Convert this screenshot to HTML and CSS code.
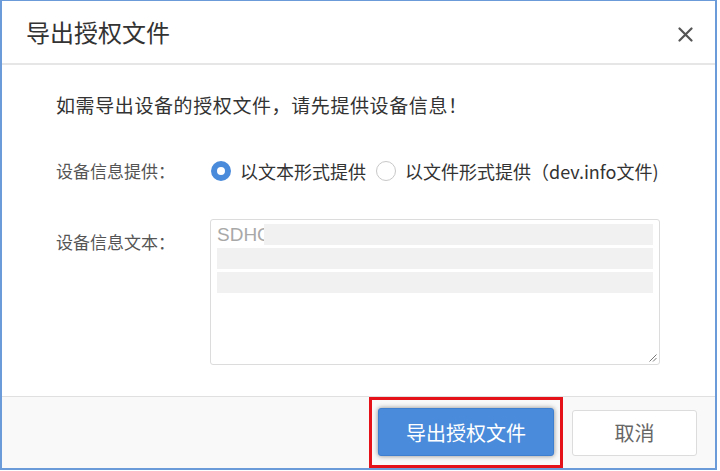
FILE: index.html
```html
<!DOCTYPE html>
<html lang="zh-CN">
<head>
<meta charset="utf-8">
<title>导出授权文件</title>
<link rel="stylesheet" href="styles.css">
</head>
<body>
<div class="dialog">
  <div class="header">
    <div class="title">导出授权文件</div>
    <svg class="close" width="15" height="15" viewBox="0 0 15 15"><path d="M1.5 1.5 L13.5 13.5 M13.5 1.5 L1.5 13.5" stroke="#555" stroke-width="2.2" stroke-linecap="round" fill="none"/></svg>
  </div>
  <div class="body">
    <div class="tip">如需导出设备的授权文件，请先提供设备信息！</div>
    <div class="form-row radio-row">
      <div class="label">设备信息提供：</div>
      <div class="radios">
        <label class="radio"><span class="dot checked"></span><span>以文本形式提供</span></label>
        <label class="radio"><span class="dot"></span><span>以文件形式提供（dev.info文件)</span></label>
      </div>
    </div>
    <div class="form-row area-row">
      <div class="label area-label">设备信息文本：</div>
      <div class="textarea">
        <div class="line"><span class="code">SDHC</span><span class="mask"></span></div>
        <div class="line"><span class="mask"></span></div>
        <div class="line"><span class="mask"></span></div>
        <svg class="grip" width="8" height="8" viewBox="0 0 8 8"><path d="M7.5 0.5 L0.5 7.5 M7.5 4 L4 7.5" stroke="#777" stroke-width="1" fill="none"/></svg>
      </div>
    </div>
  </div>
  <div class="footer">
    <span class="highlight"><button class="btn primary">导出授权文件</button></span>
    <button class="btn cancel">取消</button>
  </div>
</div>
</body>
</html>
```
FILE: styles.css
```css
* { box-sizing: border-box; }
html, body { margin: 0; padding: 0; background: #fff; }
body {
  font-family: "Noto Sans CJK SC", "Noto Sans", sans-serif;
  color: #333;
}
.dialog {
  width: 717px;
  height: 470px;
  border: 2px solid #6b9bd8;
  border-top-width: 1px;
  display: flex;
  flex-direction: column;
  background: #fff;
}
.header {
  height: 64px;
  flex: none;
  display: flex;
  align-items: center;
  justify-content: space-between;
  padding: 0 22px 0 24px;
  border-bottom: 2px solid #e6e6e6;
}
.title {
  font-size: 24px;
  color: #333;
  line-height: 30px;
}
.close { margin-top: 4px; }
.body {
  flex: 1;
  padding: 27px 0 0 54px;
}
.tip {
  font-size: 19px;
  line-height: 26px;
  color: #333;
  letter-spacing: 0.6px;
}
.form-row {
  display: grid;
  grid-template-columns: 155px 1fr;
}
.radio-row { margin-top: 40px; align-items: center; }
.label {
  font-size: 17px;
  line-height: 26px;
  color: #555;
}
.radios { display: flex; align-items: center; gap: 10px; }
.radio {
  display: flex;
  align-items: center;
  gap: 9px;
  font-size: 18px;
  line-height: 26px;
  color: #333;
}
.dot {
  width: 20px;
  height: 20px;
  border-radius: 50%;
  border: 1px solid #c8c8c8;
  background: #fff;
  flex: none;
}
.dot.checked {
  border: 6px solid #4a8bdb;
}
.area-row { margin-top: 35px; }
.area-label { margin-top: 10px; }
.textarea {
  position: relative;
  width: 450px;
  height: 146px;
  margin-left: -1px;
  border: 1px solid #dcdcdc;
  border-radius: 3px;
  padding: 4px 6px 0 6px;
  display: flex;
  flex-direction: column;
  gap: 3px;
}
.line { display: flex; height: 21px; }
.code {
  width: 47px;
  overflow: hidden;
  white-space: nowrap;
  font-family: "Liberation Sans", Arial, sans-serif;
  font-size: 19px;
  line-height: 21px;
  color: #a8a8a8;
}
.mask { flex: 1; background: #f1f1f1; }
.grip { position: absolute; right: 2px; bottom: 2px; }
.footer {
  height: 72px;
  flex: none;
  background: #f9f9f9;
  border-top: 1px solid #e0e0e0;
  display: flex;
  align-items: center;
  justify-content: flex-end;
  padding-right: 18px;
  gap: 9px;
}
.highlight {
  display: flex;
  border: 3px solid #e5121a;
  padding: 8px 6px 9px 6px;
}
.btn {
  font-family: "Noto Sans CJK SC", "Noto Sans", sans-serif;
  font-size: 20px;
  border-radius: 3px;
  cursor: pointer;
}
.primary {
  width: 176px;
  height: 48px;
  background: #4a8bdb;
  color: #fff;
  border: 1px solid #3f7fcf;
  box-shadow: 0 0 5px rgba(0,0,0,0.45);
}
.cancel {
  width: 125px;
  height: 46px;
  background: #fff;
  color: #666;
  border: 1px solid #dcdcdc;
}
```
